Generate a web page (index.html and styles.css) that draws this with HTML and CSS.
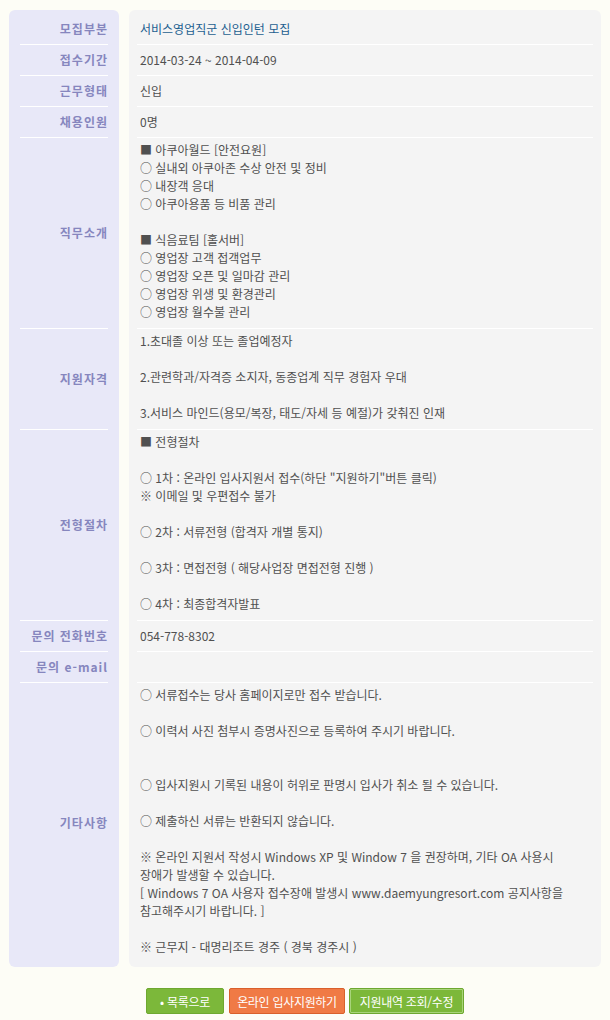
FILE: index.html
```html
<!DOCTYPE html>
<html lang="ko">
<head>
<meta charset="utf-8">
<title>모집 안내</title>
<link rel="stylesheet" href="styles.css">
</head>
<body>
<div class="page">
  <div class="sheet">
    <div class="lab first"><div class="in">모집부분</div></div>
    <div class="val first"><div class="in title"><div class="ln">서비스영업직군 신입인턴 모집</div></div></div>

    <div class="lab"><div class="in">접수기간</div></div>
    <div class="val"><div class="in"><div class="ln">2014-03-24 ~ 2014-04-09</div></div></div>

    <div class="lab"><div class="in">근무형태</div></div>
    <div class="val"><div class="in"><div class="ln">신입</div></div></div>

    <div class="lab"><div class="in">채용인원</div></div>
    <div class="val"><div class="in"><div class="ln">0명</div></div></div>

    <div class="lab"><div class="in">직무소개</div></div>
    <div class="val"><div class="in multi">
      <div class="ln">■ 아쿠아월드 [안전요원]</div>
      <div class="ln">○ 실내외 아쿠아존 수상 안전 및 정비</div>
      <div class="ln">○ 내장객 응대</div>
      <div class="ln">○ 아쿠아용품 등 비품 관리</div>
      <div class="ln"></div>
      <div class="ln">■ 식음료팀 [홀서버]</div>
      <div class="ln">○ 영업장 고객 접객업무</div>
      <div class="ln">○ 영업장 오픈 및 일마감 관리</div>
      <div class="ln">○ 영업장 위생 및 환경관리</div>
      <div class="ln">○ 영업장 월수불 관리</div>
    </div></div>

    <div class="lab"><div class="in">지원자격</div></div>
    <div class="val"><div class="in multi">
      <div class="ln">1.초대졸 이상 또는 졸업예정자</div>
      <div class="ln"></div>
      <div class="ln">2.관련학과/자격증 소지자, 동종업계 직무 경험자 우대</div>
      <div class="ln"></div>
      <div class="ln">3.서비스 마인드(용모/복장, 태도/자세 등 예절)가 갖춰진 인재</div>
    </div></div>

    <div class="lab"><div class="in">전형절차</div></div>
    <div class="val"><div class="in multi">
      <div class="ln">■ 전형절차</div>
      <div class="ln"></div>
      <div class="ln">○ 1차 : 온라인 입사지원서 접수(하단 "지원하기"버튼 클릭)</div>
      <div class="ln">※ 이메일 및 우편접수 불가</div>
      <div class="ln"></div>
      <div class="ln">○ 2차 : 서류전형 (합격자 개별 통지)</div>
      <div class="ln"></div>
      <div class="ln">○ 3차 : 면접전형 ( 해당사업장 면접전형 진행 )</div>
      <div class="ln"></div>
      <div class="ln">○ 4차 : 최종합격자발표</div>
    </div></div>

    <div class="lab"><div class="in">문의 전화번호</div></div>
    <div class="val"><div class="in"><div class="ln">054-778-8302</div></div></div>

    <div class="lab"><div class="in">문의 e-mail</div></div>
    <div class="val"><div class="in"><div class="ln"></div></div></div>

    <div class="lab last"><div class="in">기타사항</div></div>
    <div class="val last"><div class="in multi">
      <div class="ln">○ 서류접수는 당사 홈페이지로만 접수 받습니다.</div>
      <div class="ln"></div>
      <div class="ln">○ 이력서 사진 첨부시 증명사진으로 등록하여 주시기 바랍니다.</div>
      <div class="ln"></div>
      <div class="ln"></div>
      <div class="ln">○ 입사지원시 기록된 내용이 허위로 판명시 입사가 취소 될 수 있습니다.</div>
      <div class="ln"></div>
      <div class="ln">○ 제출하신 서류는 반환되지 않습니다.</div>
      <div class="ln"></div>
      <div class="ln">※ 온라인 지원서 작성시 Windows XP 및 Window 7 을 권장하며, 기타 OA 사용시</div>
      <div class="ln">장애가 발생할 수 있습니다.</div>
      <div class="ln">[ Windows 7 OA 사용자 접수장애 발생시 www.daemyungresort.com 공지사항을</div>
      <div class="ln">참고해주시기 바랍니다. ]</div>
      <div class="ln"></div>
      <div class="ln">※ 근무지 - 대명리조트 경주 ( 경북 경주시 )</div>
    </div></div>
  </div>

  <div class="actions">
    <a class="btn btn-list" href="#">• 목록으로</a>
    <a class="btn btn-apply" href="#">온라인 입사지원하기</a>
    <a class="btn btn-check" href="#">지원내역 조회/수정</a>
  </div>
</div>
</body>
</html>
```

FILE: styles.css
```css
html, body {
  margin: 0;
  padding: 0;
  background: #fdfdf6;
}

body {
  font-family: "Noto Sans CJK KR", "DejaVu Sans", sans-serif;
  font-size: 12px;
  color: #505050;
}

.page {
  padding: 10px 9px 0 9px;
}

.sheet {
  display: grid;
  grid-template-columns: 110px 472px;
  column-gap: 10px;
}

.lab {
  display: flex;
  background: #e8e8f8;
  padding: 0 11px;
}

.lab .in {
  flex: 1;
  display: flex;
  align-items: center;
  justify-content: flex-end;
  border-bottom: 1px solid #ffffff;
  padding: 6px 0;
  font-weight: bold;
  color: #8686be;
  letter-spacing: 1px;
  white-space: nowrap;
  line-height: 18px;
}

.val {
  display: flex;
  background: #f4f4f4;
  padding: 0 8px;
}

.val .in {
  flex: 1;
  border-bottom: 1px solid #ffffff;
  padding: 6px 3px;
}

.val .in.multi {
  padding: 3px 3px 7px 3px;
}

.ln {
  height: 18px;
  line-height: 18px;
  white-space: nowrap;
  overflow: hidden;
}

.val .title {
  color: #1d6090;
}

.lab.first, .val.first {
  padding-top: 4px;
  border-radius: 6px 6px 0 0;
}

.lab.last, .val.last {
  padding-bottom: 4px;
  border-radius: 0 0 6px 6px;
}

.lab.last .in, .val.last .in {
  border-bottom: none;
}

.actions {
  display: flex;
  justify-content: center;
  align-items: center;
  padding-top: 21px;
}

.btn {
  display: flex;
  align-items: center;
  justify-content: center;
  height: 26px;
  box-sizing: border-box;
  color: #ffffff;
  text-decoration: none;
  font-size: 12px;
  white-space: nowrap;
  letter-spacing: -0.3px;
  border-radius: 2px;
}

.btn-list {
  width: 78px;
  background: #7cb83a;
  border: 1px solid #6ea830;
  margin-right: 5px;
}

.btn-apply {
  width: 116px;
  background: #f07a45;
  border: 1px solid #d9602c;
  margin-right: 4px;
}

.btn-check {
  width: 115px;
  background: #7cb83a;
  border: 1px solid #6ea830;
  box-shadow: inset 0 0 0 1px #a8d47a;
}
```
